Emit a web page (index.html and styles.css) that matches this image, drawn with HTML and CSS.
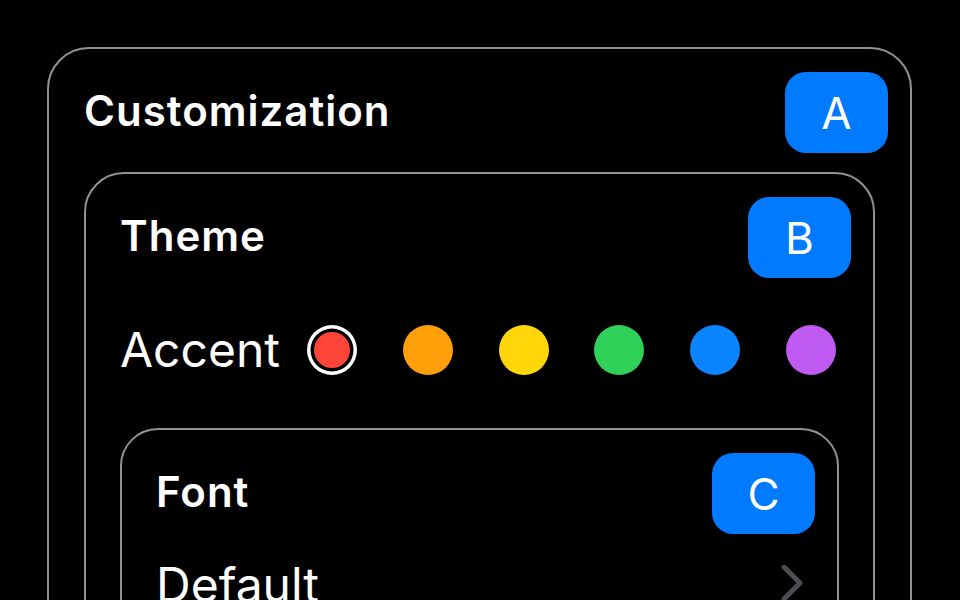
FILE: index.html
```html
<!DOCTYPE html>
<html lang="en">
<head>
<meta charset="utf-8">
<title>Customization</title>
<link rel="stylesheet" href="styles.css">
</head>
<body>
<section class="box box-outer">
  <h1 class="title">Customization</h1>
  <span class="badge">A</span>
  <section class="box box-theme">
    <h2 class="title">Theme</h2>
    <span class="badge">B</span>
    <div class="accent-row">
      <span class="label">Accent</span>
      <div class="swatches">
        <span class="swatch swatch-red selected"></span>
        <span class="swatch swatch-orange"></span>
        <span class="swatch swatch-yellow"></span>
        <span class="swatch swatch-green"></span>
        <span class="swatch swatch-blue"></span>
        <span class="swatch swatch-purple"></span>
      </div>
    </div>
    <section class="box box-font">
      <h3 class="title">Font</h3>
      <span class="badge">C</span>
      <div class="font-row">
        <span class="label">Default</span>
        <svg class="chevron" width="22" height="36" viewBox="0 0 22 36" aria-hidden="true">
          <path d="M3 2 L19 18 L3 34" fill="none" stroke="#4e4e52" stroke-width="5" stroke-linecap="round" stroke-linejoin="round"/>
        </svg>
      </div>
    </section>
  </section>
</section>
</body>
</html>
```

FILE: styles.css
```css
html, body {
  margin: 0;
  padding: 0;
  background: #000;
  color: #fff;
  font-family: Inter, "Noto Sans", "Liberation Sans", sans-serif;
  height: 600px;
  overflow: hidden;
}

body {
  padding: 47px 48px 0 47px;
}

.box {
  position: relative;
  border: 2px solid #909095;
  border-radius: 42px;
  padding: 37px 35px 0 35px;
  display: flex;
  flex-direction: column;
}

.box-outer {
  height: 700px;
}

.box-theme {
  margin-top: 36px;
  padding-left: 34px;
  padding-right: 34px;
  border-radius: 40px;
  height: 600px;
}

.box-font {
  margin-top: 49px;
  padding-left: 34px;
  padding-right: 34px;
  border-radius: 38px;
  height: 300px;
}

.title {
  margin: 0;
  font-size: 42px;
  line-height: 50px;
  font-weight: 600;
  letter-spacing: 1px;
}

.badge {
  position: absolute;
  top: 23px;
  right: 22px;
  width: 103px;
  height: 81px;
  border-radius: 21px;
  background: #007aff;
  color: #fff;
  font-size: 44px;
  font-weight: 400;
  display: flex;
  align-items: center;
  justify-content: center;
}

.accent-row {
  margin-top: 60px;
  display: flex;
  align-items: center;
  height: 58px;
}

.label {
  font-size: 48px;
  font-weight: 400;
  line-height: 58px;
}

.swatches {
  display: flex;
  gap: 45.8px;
  margin-left: 27px;
}

.swatch {
  width: 50px;
  height: 50px;
  border-radius: 50%;
  box-sizing: border-box;
}

.swatch.selected {
  width: 36px;
  height: 36px;
  margin: 7px;
  box-shadow: 0 0 0 3.5px #000, 0 0 0 7px #fff;
}

.swatch-red { background: #ff453a; }
.swatch-orange { background: #ff9f0a; }
.swatch-yellow { background: #ffd60a; }
.swatch-green { background: #30d158; }
.swatch-blue { background: #0a84ff; }
.swatch-purple { background: #bf5af2; }

.font-row {
  margin-top: 39px;
  display: flex;
  align-items: center;
  justify-content: space-between;
  height: 58px;
}

.chevron {
  display: block;
  margin-top: -4px;
}
```
